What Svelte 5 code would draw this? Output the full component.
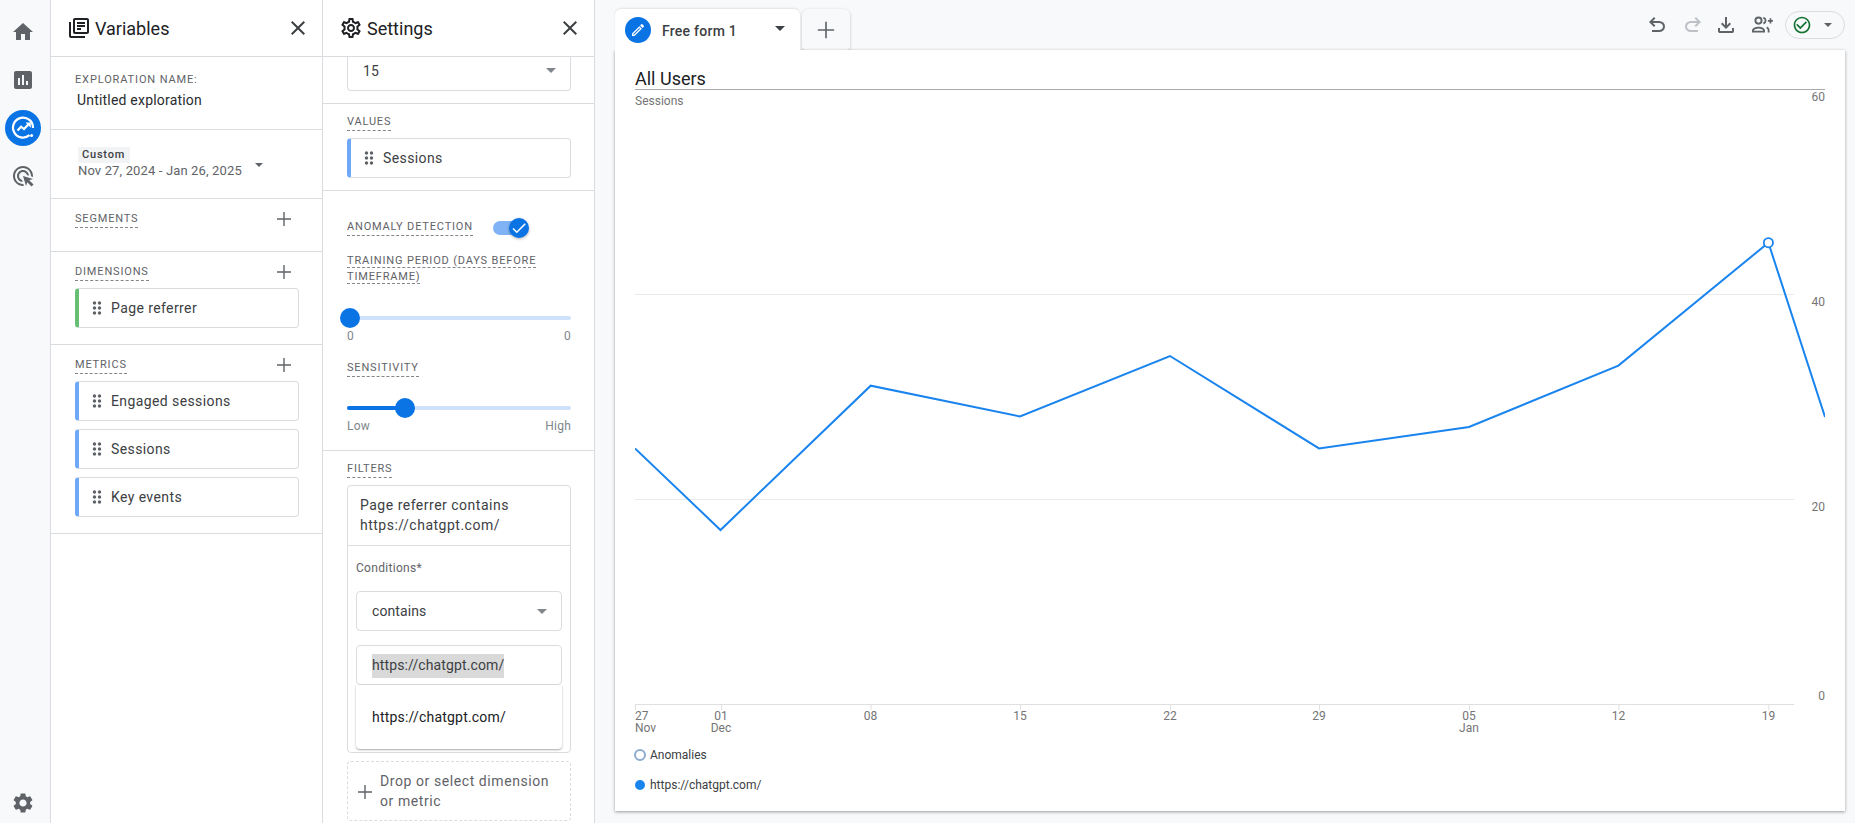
<script>
  const P = {
    home: 'M10 20v-6h4v6h5v-8h3L12 3 2 12h3v8z',
    bars: 'M19 3H5c-1.1 0-2 .9-2 2v14c0 1.1.9 2 2 2h14c1.1 0 2-.9 2-2V5c0-1.1-.9-2-2-2zM9 17H7v-7h2v7zm4 0h-2V7h2v10zm4 0h-2v-4h2v4z',
    ads: 'M11.71,17.99C8.53,17.84,6,15.22,6,12c0-3.31,2.69-6,6-6c3.22,0,5.84,2.53,5.99,5.71l-2.1-0.63C15.48,9.31,13.89,8,12,8c-2.21,0-4,1.79-4,4c0,1.89,1.31,3.48,3.08,3.89L11.71,17.99z M22,12c0,0.3-0.01,0.6-0.04,0.9l-1.97-0.59C20,12.21,20,12.1,20,12c0-4.42-3.58-8-8-8s-8,3.58-8,8s3.58,8,8,8c0.1,0,0.21,0,0.31-0.01l0.59,1.97C12.6,21.99,12.3,22,12,22C6.48,22,2,17.52,2,12C2,6.48,6.48,2,12,2S22,6.48,22,12z M18.23,16.26L22,15l-10-3l3,10l1.26-3.77l4.27,4.27l1.98-1.98L18.23,16.26z',
    gear: 'M19.14 12.94c.04-.3.06-.61.06-.94 0-.32-.02-.64-.07-.94l2.03-1.58a.49.49 0 00.12-.61l-1.92-3.32a.488.488 0 00-.59-.22l-2.39.96c-.5-.38-1.03-.7-1.62-.94l-.36-2.54a.484.484 0 00-.48-.41h-3.84c-.24 0-.43.17-.47.41l-.36 2.54c-.59.24-1.13.57-1.62.94l-2.39-.96c-.22-.08-.47 0-.59.22L2.74 8.87c-.12.21-.08.47.12.61l2.03 1.58c-.05.3-.09.63-.09.94s.02.64.07.94l-2.03 1.58a.49.49 0 00-.12.61l1.92 3.32c.12.22.37.29.59.22l2.39-.96c.5.38 1.03.7 1.62.94l.36 2.54c.05.24.24.41.48.41h3.84c.24 0 .44-.17.47-.41l.36-2.54c.59-.24 1.13-.56 1.62-.94l2.39.96c.22.08.47 0 .59-.22l1.92-3.32c.12-.22.07-.47-.12-.61l-2.01-1.58zM12 15.6c-1.98 0-3.6-1.62-3.6-3.6s1.62-3.6 3.6-3.6 3.6 1.62 3.6 3.6-1.62 3.6-3.6 3.6z',
    gearO: 'M19.43 12.98c.04-.32.07-.64.07-.98 0-.34-.03-.66-.07-.98l2.11-1.65c.19-.15.24-.42.12-.64l-2-3.46c-.09-.16-.26-.25-.44-.25-.06 0-.12.01-.17.03l-2.49 1c-.52-.4-1.08-.73-1.69-.98l-.38-2.65C14.46 2.18 14.25 2 14 2h-4c-.25 0-.46.18-.49.42l-.38 2.65c-.61.25-1.17.59-1.69.98l-2.49-1c-.06-.02-.12-.03-.18-.03-.17 0-.34.09-.43.25l-2 3.46c-.13.22-.07.49.12.64l2.11 1.65c-.04.32-.07.65-.07.98 0 .33.03.66.07.98l-2.11 1.65c-.19.15-.24.42-.12.64l2 3.46c.09.16.26.25.44.25.06 0 .12-.01.17-.03l2.49-1c.52.4 1.08.73 1.69.98l.38 2.65c.03.24.24.42.49.42h4c.25 0 .46-.18.49-.42l.38-2.65c.61-.25 1.17-.59 1.69-.98l2.49 1c.06.02.12.03.18.03.17 0 .34-.09.43-.25l2-3.46c.12-.22.07-.49-.12-.64l-2.11-1.65zm-1.98-1.71c.04.31.05.52.05.73 0 .21-.02.43-.05.73l-.14 1.13.89.7 1.08.84-.7 1.21-1.27-.51-1.04-.42-.9.68c-.43.32-.84.56-1.25.73l-1.06.43-.16 1.13-.2 1.35h-1.4l-.19-1.35-.16-1.13-1.06-.43c-.43-.18-.83-.41-1.23-.71l-.91-.7-1.06.43-1.27.51-.7-1.21 1.08-.84.89-.7-.14-1.13c-.03-.31-.05-.54-.05-.74s.02-.43.05-.73l.14-1.13-.89-.7-1.08-.84.7-1.21 1.27.51 1.04.42.9-.68c.43-.32.84-.56 1.25-.73l1.06-.43.16-1.13.2-1.35h1.39l.19 1.35.16 1.13 1.06.43c.43.18.83.41 1.23.71l.91.7 1.06-.43 1.27-.51.7 1.21-1.07.85-.89.7.14 1.13zM12 8c-2.21 0-4 1.79-4 4s1.79 4 4 4 4-1.79 4-4-1.79-4-4-4zm0 6c-1.1 0-2-.9-2-2s.9-2 2-2 2 .9 2 2-.9 2-2 2z',
    lib: 'M4 6H2v14c0 1.1.9 2 2 2h14v-2H4V6zm16-4H8c-1.1 0-2 .9-2 2v12c0 1.1.9 2 2 2h12c1.1 0 2-.9 2-2V4c0-1.1-.9-2-2-2zm0 14H8V4h12v12zM10 9h8v2h-8zm0 3h4v2h-4zm0-6h8v2h-8z',
    close: 'M19 6.41L17.59 5 12 10.59 6.41 5 5 6.41 10.59 12 5 17.59 6.41 19 12 13.41 17.59 19 19 17.59 13.41 12z',
    add: 'M19 12.7h-6.3V19h-1.4v-6.3H5v-1.4h6.3V5h1.4v6.3H19z',
    drag: 'M11 18c0 1.1-.9 2-2 2s-2-.9-2-2 .9-2 2-2 2 .9 2 2zm-2-8c-1.1 0-2 .9-2 2s.9 2 2 2 2-.9 2-2-.9-2-2-2zm0-6c-1.1 0-2 .9-2 2s.9 2 2 2 2-.9 2-2-.9-2-2-2zm6 4c1.1 0 2-.9 2-2s-.9-2-2-2-2 .9-2 2 .9 2 2 2zm0 2c-1.1 0-2 .9-2 2s.9 2 2 2 2-.9 2-2-.9-2-2-2zm0 6c-1.1 0-2 .9-2 2s.9 2 2 2 2-.9 2-2-.9-2-2-2z',
    edit: 'M14.06 9.02l.92.92L5.92 19H5v-.92l9.06-9.06M17.66 3c-.25 0-.51.1-.7.29l-1.83 1.83 3.75 3.75 1.83-1.83c.39-.39.39-1.02 0-1.41l-2.34-2.34c-.2-.2-.45-.29-.71-.29zm-3.6 3.19L3 17.25V21h3.75L17.81 9.94l-3.75-3.75z',
    check: 'M16.59 7.58L10 14.17l-3.59-3.58L5 12l5 5 8-8zM12 2C6.48 2 2 6.48 2 12s4.48 10 10 10 10-4.48 10-10S17.52 2 12 2zm0 18c-4.42 0-8-3.58-8-8s3.58-8 8-8 8 3.58 8 8-3.58 8-8 8z',
    drop: 'M7 10l5 5 5-5z'
  };
  const undo = 'M280-200v-80h284q63 0 109.5-40T720-420q0-60-46.5-100T564-560H312l104 104-56 56-200-200 200-200 56 56-104 104h252q97 0 166.5 63T800-420q0 94-69.5 157T564-200H280Z';
  const redo = 'M396-200q-97 0-166.5-63T160-420q0-94 69.5-157T396-640h252L544-744l56-56 200 200-200 200-56-56 104-104H396q-63 0-109.5 40T240-420q0 60 46.5 100T396-280h284v80H396Z';
  const download = 'M480-320 280-520l56-58 104 104v-326h80v326l104-104 56 58-200 200ZM240-160q-33 0-56.5-23.5T160-240v-120h80v120h480v-120h80v120q0 33-23.5 56.5T720-160H240Z';

  const metrics = ['Engaged sessions', 'Sessions', 'Key events'];
  const line = [[0,358.4],[85.5,440],[235.7,295.7],[385,326.5],[535,266],[684,358.4],[834,337],[983.4,275.6],[1133.4,152.7],[1190,327]];
  const points = line.map((p) => p.join(',')).join(' ');
  const ticks = [
    { x: 0, a: '27', b: 'Nov', anchor: 'start' },
    { x: 86, a: '01', b: 'Dec', anchor: 'middle' },
    { x: 235.5, a: '08', anchor: 'middle' },
    { x: 385, a: '15', anchor: 'middle' },
    { x: 535, a: '22', anchor: 'middle' },
    { x: 684, a: '29', anchor: 'middle' },
    { x: 834, a: '05', b: 'Jan', anchor: 'middle' },
    { x: 983.4, a: '12', anchor: 'middle' },
    { x: 1133.4, a: '19', anchor: 'middle' }
  ];
  const yLabels = [['60', 11], ['40', 216], ['20', 421], ['0', 610]];
</script>

<div class="app">
  <nav class="nav">
    <button class="nav-btn"><svg viewBox="0 0 24 24"><path d={P.home} /></svg></button>
    <button class="nav-btn"><svg viewBox="0 0 24 24"><path d={P.bars} /></svg></button>
    <button class="nav-btn active" aria-label="Explore">
      <svg viewBox="0 0 36 36" class="explore">
        <path d="M24.5 25.2A10 10 0 1 1 28 18" fill="none" stroke="#fff" stroke-width="2.2" />
        <path d="M12.5 20.5l3.6-3.8 2.9 2.4 5-5.4" fill="none" stroke="#fff" stroke-width="2.2" />
        <path d="M20.6 12.6h5.2v5.2z" fill="#fff" />
        <circle cx="26.6" cy="25.6" r="1.5" fill="#fff" />
      </svg>
    </button>
    <button class="nav-btn"><svg viewBox="0 0 24 24"><path d={P.ads} /></svg></button>
    <button class="nav-btn settings"><svg viewBox="0 0 24 24"><path d={P.gear} /></svg></button>
  </nav>

  <aside class="panel">
    <header class="head">
      <svg class="head-icon" viewBox="0 0 24 24"><path d={P.lib} /></svg>
      <h2>Variables</h2>
      <svg class="close" viewBox="0 0 24 24"><path d={P.close} /></svg>
    </header>

    <section class="sec name-sec">
      <div class="cap">EXPLORATION NAME:</div>
      <div class="name">Untitled exploration</div>
    </section>

    <section class="sec date-sec">
      <span class="chip-custom">Custom</span>
      <div class="date-row">
        <span class="date">Nov 27, 2024 - Jan 26, 2025</span>
        <svg class="date-drop" viewBox="7 10 10 5"><path d={P.drop} /></svg>
      </div>
    </section>

    <section class="sec seg-sec">
      <div class="row"><span class="label">SEGMENTS</span><svg class="plus" viewBox="0 0 24 24"><path d={P.add} /></svg></div>
    </section>

    <section class="sec dim-sec">
      <div class="row"><span class="label">DIMENSIONS</span><svg class="plus" viewBox="0 0 24 24"><path d={P.add} /></svg></div>
      <div class="list">
        <div class="pill green"><svg viewBox="0 0 24 24"><path d={P.drag} /></svg><span>Page referrer</span></div>
      </div>
    </section>

    <section class="sec dim-sec">
      <div class="row"><span class="label">METRICS</span><svg class="plus" viewBox="0 0 24 24"><path d={P.add} /></svg></div>
      <div class="list">
        {#each metrics as m}
          <div class="pill"><svg viewBox="0 0 24 24"><path d={P.drag} /></svg><span>{m}</span></div>
        {/each}
      </div>
    </section>
  </aside>

  <aside class="panel">
    <header class="head">
      <svg class="head-icon" viewBox="0 0 24 24"><path d={P.gearO} /></svg>
      <h2>Settings</h2>
      <svg class="close" viewBox="0 0 24 24"><path d={P.close} /></svg>
    </header>

    <section class="sec top-sec">
      <div class="select clipped"><span>15</span><svg viewBox="7 10 10 5"><path d={P.drop} /></svg></div>
    </section>

    <section class="sec values-sec">
      <span class="label">VALUES</span>
      <div class="pill mt7"><svg viewBox="0 0 24 24"><path d={P.drag} /></svg><span>Sessions</span></div>
    </section>

    <section class="sec anomaly-sec">
      <div class="toggle-row">
        <span class="label">ANOMALY DETECTION</span>
        <div class="toggle">
          <div class="knob">
            <svg viewBox="0 0 24 24"><path d="M9 16.2L4.8 12l-1.4 1.4L9 19 21 7l-1.4-1.4z" /></svg>
          </div>
        </div>
      </div>
      <div class="cap-multi"><span>TRAINING PERIOD (DAYS BEFORE TIMEFRAME)</span></div>
      <div class="slider s1"><div class="thumb at0"></div></div>
      <div class="ends"><span>0</span><span>0</span></div>
      <span class="label sens">SENSITIVITY</span>
      <div class="slider s2"><div class="fill"></div><div class="thumb at25"></div></div>
      <div class="ends"><span>Low</span><span>High</span></div>
    </section>

    <section class="sec filters-sec">
      <span class="label">FILTERS</span>
      <div class="filter">
        <div class="filter-title">Page referrer contains<br />https://chatgpt.com/</div>
        <div class="filter-body">
          <div class="cond">Conditions*</div>
          <div class="select small"><span>contains</span><svg viewBox="7 10 10 5"><path d={P.drop} /></svg></div>
          <div class="input"><span class="sel">https://chatgpt.com/</span></div>
          <div class="menu">https://chatgpt.com/</div>
        </div>
      </div>
      <div class="dropzone">
        <svg viewBox="0 0 24 24"><path d={P.add} /></svg>
        <span>Drop or select dimension or metric</span>
      </div>
    </section>
  </aside>

  <main class="main">
    <div class="topbar">
      <div class="tabs">
        <div class="tab">
          <span class="tab-ic"><svg viewBox="0 0 24 24"><path d={P.edit} /></svg></span>
          <span class="tab-name">Free form 1</span>
          <svg class="tab-drop" viewBox="7 10 10 5"><path d={P.drop} /></svg>
        </div>
        <div class="tab-add"><svg viewBox="0 0 24 24"><path d={P.add} /></svg></div>
      </div>
      <div class="tools">
        <svg viewBox="0 -960 960 960"><path d={undo} /></svg>
        <svg class="off" viewBox="0 -960 960 960"><path d={redo} /></svg>
        <svg class="dl" viewBox="0 -960 960 960"><path d={download} /></svg>
        <svg viewBox="0 0 24 24">
          <circle cx="8.5" cy="7.6" r="3.1" fill="none" stroke="#5f6368" stroke-width="1.9" />
          <path d="M2 19.6v-2c0-2.4 3.6-3.9 6.5-3.9s6.5 1.5 6.5 3.9v2H2zm1.9-1.9h9.2v-.1c0-1-2.3-2-4.6-2s-4.6 1-4.6 2z" />
          <path d="M13.4 4.6c1.5.6 2.2 1.7 2.2 3s-.7 2.4-2.2 3M16.7 14.2c1.3.7 1.9 1.6 1.9 2.9v2.5" fill="none" stroke="#5f6368" stroke-width="1.8" />
          <path d="M19.6 8.7h-1.7V7h1.7V5.3h1.7V7H23v1.7h-1.7v1.7h-1.7z" />
        </svg>
        <div class="status">
          <svg viewBox="0 0 24 24"><path d={P.check} /></svg>
          <svg class="status-drop" viewBox="7 10 10 5"><path d={P.drop} /></svg>
        </div>
      </div>
    </div>

    <div class="card">
      <div class="title">All Users</div>
      <svg class="chart" viewBox="0 0 1190 650">
        <text class="axis" x="0" y="15">Sessions</text>
        <line class="grid" x1="0" x2="1159" y1="204.5" y2="204.5" />
        <line class="grid" x1="0" x2="1159" y1="409.5" y2="409.5" />
        <line class="base" x1="0" x2="1159" y1="614.5" y2="614.5" />
        {#each yLabels as [t, y]}
          <text class="axis" x="1190" {y} text-anchor="end">{t}</text>
        {/each}
        {#each ticks as k}
          <line class="base" x1={k.x + 0.5} x2={k.x + 0.5} y1="614.5" y2="620" />
          <text class="axis" x={k.x} y="630" text-anchor={k.anchor}>{k.a}</text>
          {#if k.b}<text class="axis" x={k.x} y="642" text-anchor={k.anchor}>{k.b}</text>{/if}
        {/each}
        <polyline {points} fill="none" stroke="#1a84ee" stroke-width="2" />
        <circle cx="1133.4" cy="152.7" r="4.6" fill="#fff" stroke="#1a84ee" stroke-width="1.8" />
      </svg>
      <div class="legend">
        <div class="lg"><i class="ring"></i>Anomalies</div>
        <div class="lg"><i class="dot"></i>https://chatgpt.com/</div>
      </div>
    </div>
  </main>
</div>

<style>
  :global(body) { margin: 0; background: #f8f9fa; font-family: Roboto, "Liberation Sans", sans-serif; color: #3c4043; }
  .app { display: flex; width: 1855px; height: 823px; overflow: hidden; background: #f8f9fa; }

  .nav { width: 45px; flex: none; padding-left: 5px; display: flex; flex-direction: column; border-right: 1px solid #dadce0; }
  .nav-btn { width: 36px; height: 36px; padding: 0; border: 0; background: none; display: flex; align-items: center; justify-content: center; margin-top: 12px; }
  .nav-btn:first-child { margin-top: 14px; }
  .nav-btn svg { width: 24px; height: 24px; fill: #5f6368; }
  .nav-btn.active { background: #0b74e5; border-radius: 50%; }
  .nav-btn.active svg { width: 36px; height: 36px; fill: none; }
  .nav-btn.settings { margin-top: auto; margin-bottom: 2px; }

  .panel { width: 271px; flex: none; background: #fff; border-right: 1px solid #dadce0; overflow: hidden; }
  .head { height: 56px; border-bottom: 1px solid #dadce0; display: flex; align-items: center; padding: 0 12px 0 16px; }
  .head-icon { width: 24px; height: 24px; fill: #202124; }
  .head h2 { margin: 0 0 0 4px; font-size: 18px; font-weight: 400; color: #202124; flex: 1; }
  .close { width: 24px; height: 24px; fill: #3c4043; }

  .sec { padding: 0 23px 0 24px; border-bottom: 1px solid #dadce0; }
  .cap { font-size: 11px; line-height: 16px; letter-spacing: .87px; color: #5f6368; }
  .name-sec { padding-top: 15px; padding-bottom: 19px; }
  .name { margin-top: 2px; padding-left: 2px; font-size: 14px; line-height: 20px; color: #2a2c2f; letter-spacing: .2px; }

  .date-sec { padding-top: 17px; padding-bottom: 19px; }
  .chip-custom { display: block; width: max-content; margin-left: 3px; padding: 0 5px 0 4px; height: 16px; line-height: 16px; font-size: 11px; font-weight: 500; letter-spacing: .8px; background: #f1f3f4; color: #3c4043; }
  .date-row { display: flex; align-items: center; margin-left: 3px; }
  .date { font-size: 13px; line-height: 16px; color: #5f6368; letter-spacing: .14px; }
  .date-drop { width: 8px; height: 4px; fill: #5f6368; margin-left: 13px; margin-top: -13px; }

  .row { display: flex; align-items: center; justify-content: space-between; height: 24px; }
  .plus { width: 24px; height: 24px; fill: #5f6368; margin-right: 3px; }
  .label { display: block; width: max-content; font-size: 11px; line-height: 16px; letter-spacing: .83px; color: #5f6368; border-bottom: 1px dashed #80868b; white-space: nowrap; }
  .seg-sec { padding-top: 8px; padding-bottom: 20px; }
  .dim-sec { padding-top: 8px; padding-bottom: 16px; }
  .list { margin-top: 4px; display: flex; flex-direction: column; gap: 8px; }

  .pill { height: 40px; box-sizing: border-box; display: flex; align-items: center; gap: 4px; padding-left: 8px; border: 1px solid #dadce0; border-left: 4px solid #6ea8f7; border-radius: 4px; font-size: 14px; letter-spacing: .4px; color: #3c4043; }
  .pill.green { border-left-color: #67bf74; }
  .pill svg { width: 20px; height: 20px; fill: #5f6368; }
  .mt7 { margin-top: 7px; }

  .top-sec { padding-bottom: 12px; }
  .select { display: flex; align-items: center; justify-content: space-between; box-sizing: border-box; border: 1px solid #dadce0; border-radius: 4px; padding: 0 14px 0 15px; font-size: 14px; color: #3c4043; letter-spacing: .1px; }
  .select svg { width: 10px; height: 5px; fill: #80868b; }
  .clipped { height: 34px; border-top: 0; border-radius: 0 0 4px 4px; padding-bottom: 6px; }
  .values-sec { padding-top: 10px; padding-bottom: 12px; }

  .anomaly-sec { padding-top: 28px; padding-bottom: 16px; }
  .toggle-row { display: flex; align-items: center; gap: 20px; }
  .toggle { width: 33px; height: 14px; border-radius: 7px; background: #7fb3f5; position: relative; }
  .knob { position: absolute; right: -3px; top: -3px; width: 20px; height: 20px; border-radius: 50%; background: #0b74e5; box-shadow: 0 1px 3px rgba(0,0,0,.3); display: flex; align-items: center; justify-content: center; }
  .knob svg { width: 18px; height: 18px; fill: #fff; }
  .cap-multi { margin-top: 17px; font-size: 11px; line-height: 16px; letter-spacing: .83px; color: #5f6368; }
  .cap-multi span { border-bottom: 1px dashed #80868b; }

  .slider { height: 20px; position: relative; }
  .slider::before { content: ""; position: absolute; left: 0; right: 0; top: 8px; height: 4px; border-radius: 2px; background: #cfe2fb; }
  .s1 { margin-top: 23px; }
  .s2 { margin-top: 21px; }
  .fill { position: absolute; left: 0; width: 57px; top: 8px; height: 4px; border-radius: 2px; background: #0b74e5; }
  .thumb { position: absolute; top: 0; width: 20px; height: 20px; border-radius: 50%; background: #0b74e5; }
  .at0 { left: -7px; }
  .at25 { left: 48px; }
  .ends { display: flex; justify-content: space-between; font-size: 12px; line-height: 16px; letter-spacing: .25px; color: #80868b; }
  .sens { margin-top: 16px; }

  .filters-sec { padding-top: 10px; border-bottom: 0; }
  .filter { margin-top: 7px; height: 268px; box-sizing: border-box; border: 1px solid #dadce0; border-radius: 4px; }
  .filter-title { padding: 9px 12px 10px; font-size: 14px; line-height: 20px; color: #3c4043; letter-spacing: .5px; border-bottom: 1px solid #dadce0; }
  .filter-body { position: relative; padding: 14px 8px 0; }
  .cond { font-size: 12px; line-height: 16px; color: #5f6368; letter-spacing: .3px; }
  .select.small { height: 40px; margin-top: 15px; }
  .input { height: 40px; box-sizing: border-box; margin-top: 14px; padding: 8px 15px 0; border: 1px solid #dadce0; border-radius: 4px; font-size: 14px; line-height: 22px; letter-spacing: .12px; color: #3c4043; }
  .sel { display: inline-block; background: #d9d9d9; height: 24px; }
  .menu { position: absolute; left: 8px; right: 8px; top: 139px; height: 64px; box-sizing: border-box; padding: 22px 16px 0; background: #fff; border-radius: 0 0 4px 4px; box-shadow: 0 1px 2px rgba(60,64,67,.45); font-size: 14px; line-height: 20px; letter-spacing: .2px; color: #202124; }
  .dropzone { margin-top: 8px; margin-bottom: 10px; height: 60px; box-sizing: border-box; border: 1px dashed #dadce0; border-radius: 4px; display: flex; align-items: center; padding: 0 10px 0 5px; font-size: 14px; line-height: 20px; letter-spacing: .58px; color: #5f6368; gap: 3px; }
  .dropzone svg { width: 24px; height: 24px; flex: none; fill: #5f6368; margin-top: 1px; }

  .main { flex: 1; min-width: 0; padding: 0 10px 0 20px; display: flex; flex-direction: column; }
  .topbar { height: 50px; display: flex; justify-content: space-between; flex: none; }
  .tabs { display: flex; align-items: flex-end; gap: 2px; }
  .tab { width: 185px; height: 41px; box-sizing: border-box; background: #fff; border-radius: 6px 6px 0 0; box-shadow: 0 -1px 2px rgba(60,64,67,.12); display: flex; align-items: center; padding: 0 15px 0 10px; position: relative; z-index: 1; }
  .tab-ic { width: 26px; height: 26px; border-radius: 50%; background: #0b74e5; display: flex; align-items: center; justify-content: center; }
  .tab-ic svg { width: 16px; height: 16px; fill: #fff; }
  .tab-name { margin-left: 11px; font-size: 14px; font-weight: 500; color: #3c4043; letter-spacing: .25px; flex: 1; padding-top: 3px; }
  .tab-drop { width: 10px; height: 5px; fill: #3c4043; margin-top: -3px; }
  .tab-add { width: 48px; height: 41px; background: #f8f9fa; border-radius: 6px 6px 4px 4px; box-shadow: 0 1px 3px rgba(60,64,67,.3); display: flex; align-items: center; justify-content: center; }
  .tab-add svg { width: 28px; height: 28px; fill: #5f6368; }
  .tools { display: flex; align-items: center; gap: 12px; }
  .tools > svg { width: 24px; height: 24px; fill: #5f6368; }
  .tools > svg.off { fill: #bdc1c6; }
  .tools > svg.dl { margin-left: -3px; }
  .status { width: 60px; height: 28px; box-sizing: border-box; margin-left: -1px; border: 1px solid #dadce0; border-radius: 14px; display: flex; align-items: center; justify-content: space-between; padding: 0 12px 0 6px; }
  .status svg { width: 20px; height: 20px; fill: #137333; }
  .status .status-drop { width: 8px; height: 4px; fill: #5f6368; }

  .card { height: 761px; flex: none; box-sizing: border-box; background: #fff; box-shadow: 0 1px 3px rgba(60,64,67,.5); padding: 17px 20px 0; }
  .title { height: 22px; line-height: 24px; font-size: 18px; color: #202124; border-bottom: 1px solid #aaa; }
  .chart { display: block; width: 1190px; height: 650px; }
  .axis { font-family: Roboto, "Liberation Sans", sans-serif; font-size: 12px; fill: #757575; }
  .grid { stroke: #ebebeb; stroke-width: 1; }
  .base { stroke: #e0e0e0; stroke-width: 1; }
  .legend { margin-top: 7px; display: flex; flex-direction: column; gap: 14px; }
  .lg { display: flex; align-items: center; height: 16px; gap: 5px; font-size: 12px; color: #3c4043; }
  .ring, .dot { width: 10px; height: 10px; border-radius: 50%; box-sizing: border-box; flex: none; }
  .ring { width: 12px; height: 12px; margin: 0 -1px; border: 2px solid #8fabd0; background: #fff; }
  .dot { background: #1a84ee; }
</style>
